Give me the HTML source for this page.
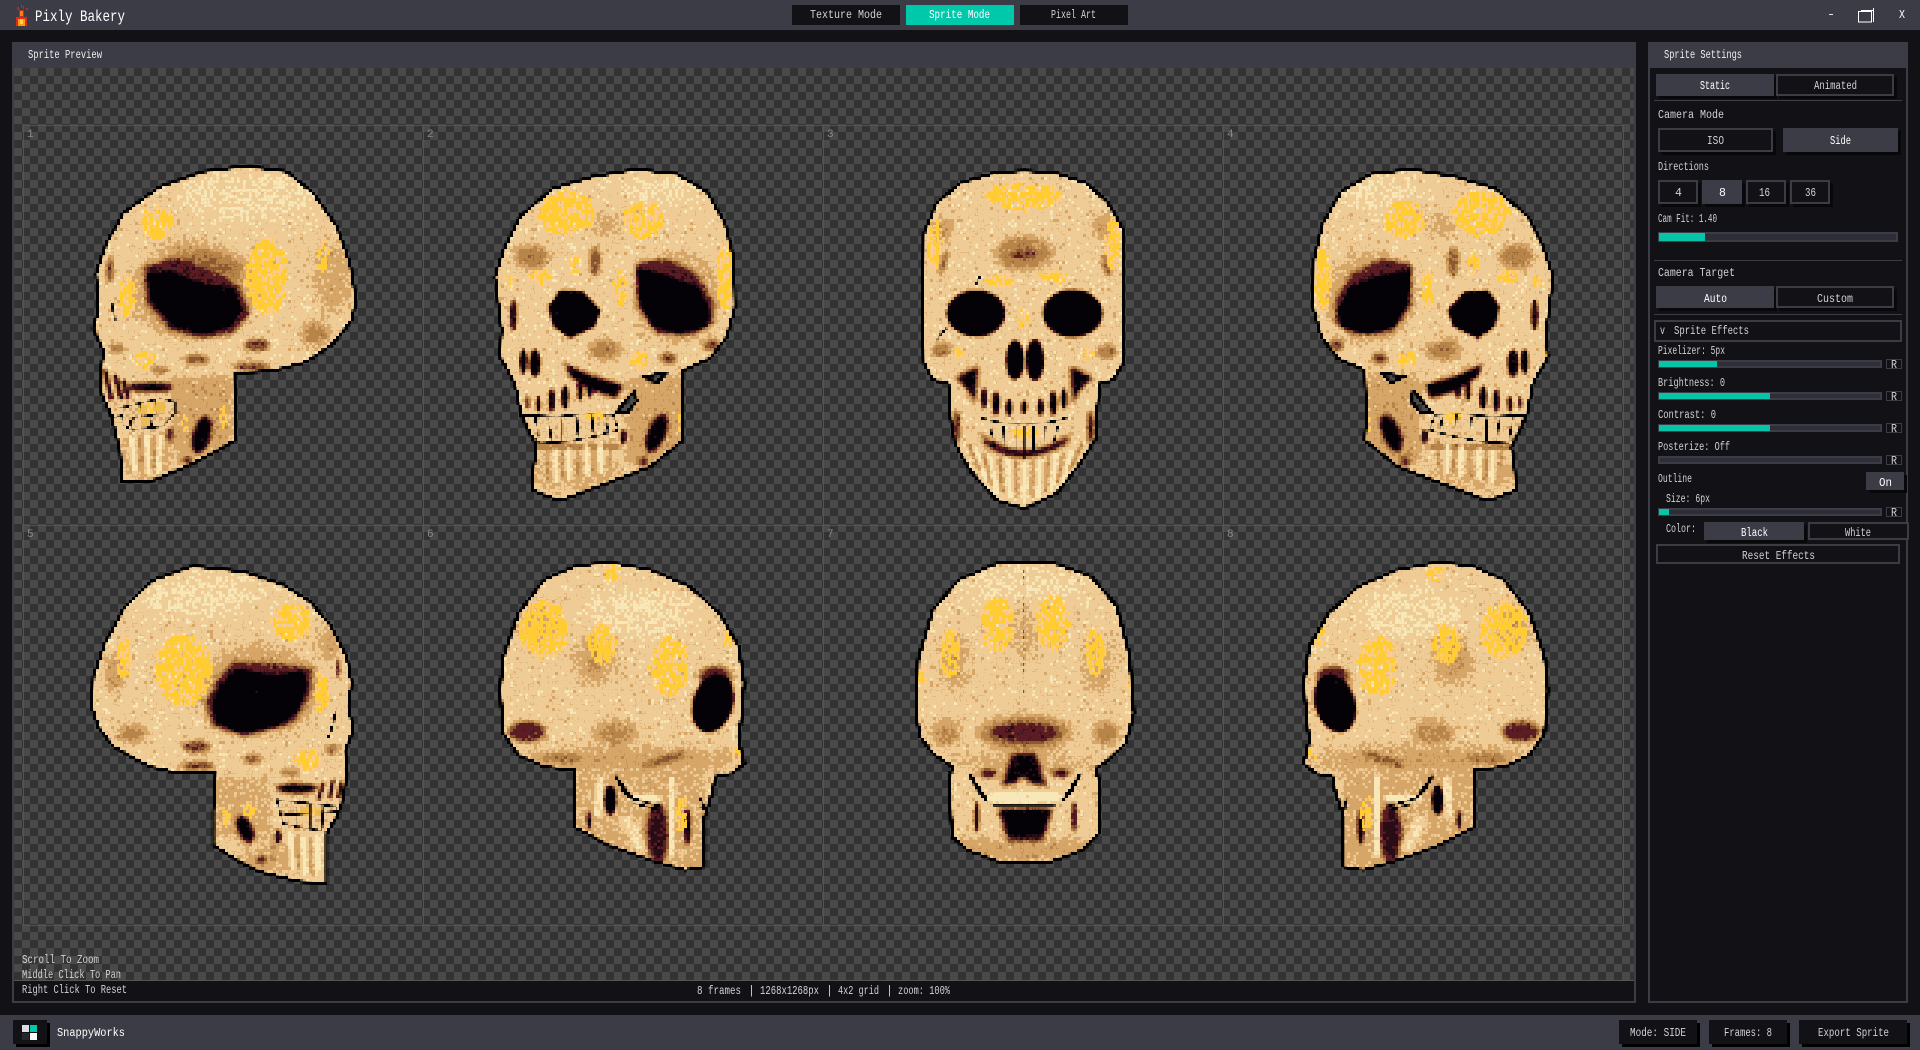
<!DOCTYPE html>
<html><head><meta charset="utf-8"><title>Pixly Bakery</title>
<style>
html,body{margin:0;padding:0;background:#111116;overflow:hidden}
svg{display:block}
text{font-family:"Liberation Mono","DejaVu Sans Mono",monospace;font-size:11.5px;fill:#d2d2d6}
.w{fill:#fff}.n{fill:#8a8a8e;font-size:11px}
.cr{shape-rendering:crispEdges}
.b3{filter:url(#b3)}.b6{filter:url(#b6)}.b12{filter:url(#b12)}.b20{filter:url(#b20)}
</style></head><body>
<svg xmlns="http://www.w3.org/2000/svg" width="1920" height="1050" viewBox="0 0 1920 1050">
<defs>
<pattern id="chk" x="14" y="68" width="16" height="16" patternUnits="userSpaceOnUse">
<rect width="16" height="16" fill="#333"/><rect width="8" height="8" fill="#4a4a4a"/><rect x="8" y="8" width="8" height="8" fill="#4a4a4a"/>
</pattern>
<filter id="b3" x="-50%" y="-50%" width="200%" height="200%"><feGaussianBlur stdDeviation="3"/></filter>
<filter id="b6" x="-50%" y="-50%" width="200%" height="200%"><feGaussianBlur stdDeviation="6"/></filter>
<filter id="b12" x="-60%" y="-60%" width="220%" height="220%"><feGaussianBlur stdDeviation="12"/></filter>
<filter id="b20" x="-60%" y="-60%" width="220%" height="220%"><feGaussianBlur stdDeviation="20"/></filter>
<filter id="pal" filterUnits="userSpaceOnUse" x="0" y="0" width="1920" height="1050" color-interpolation-filters="sRGB">
<feTurbulence type="fractalNoise" baseFrequency=".55" numOctaves="2" seed="3" result="t"/>
<feColorMatrix in="t" values="1 0 0 0 0 1 0 0 0 0 1 0 0 0 0 0 0 0 0 1" result="n"/>
<feComposite in="SourceGraphic" in2="n" operator="arithmetic" k1="0" k2="1" k3=".36" k4="-.18"/>
<feComponentTransfer>
<feFuncR type="discrete" tableValues=".02 .16 .36 .55 .72 .84 .94 .98"/>
<feFuncG type="discrete" tableValues=".01 .05 .11 .35 .52 .65 .80 .91"/>
<feFuncB type="discrete" tableValues=".03 .09 .14 .19 .29 .41 .59 .72"/>
</feComponentTransfer>
<feComposite in2="SourceAlpha" operator="in"/>
</filter>
<filter id="yel" filterUnits="userSpaceOnUse" x="0" y="0" width="1920" height="1050" color-interpolation-filters="sRGB">
<feTurbulence type="fractalNoise" baseFrequency=".5 .14" numOctaves="2" seed="11" result="t"/>
<feColorMatrix in="t" values="0 0 0 0 1 0 0 0 0 .8 0 0 0 0 .2 3 0 0 0 -.72" result="na"/>
<feComposite in="SourceGraphic" in2="na" operator="arithmetic" k1="1" k2="0" k3="0" k4="0"/>
<feComponentTransfer result="m"><feFuncA type="discrete" tableValues="0 1"/></feComponentTransfer>
<feFlood flood-color="#ffcc33"/>
<feComposite in2="m" operator="in"/>
</filter>
<filter id="mos" filterUnits="userSpaceOnUse" primitiveUnits="userSpaceOnUse" x="0" y="0" width="1920" height="1050" color-interpolation-filters="sRGB">
<feFlood x="1" y="1" width="1" height="1" flood-color="#000"/>
<feComposite x="0" y="0" width="3" height="3"/>
<feTile x="0" y="0" width="1920" height="1050" result="a"/>
<feComposite in="SourceGraphic" in2="a" operator="in"/>
<feMorphology operator="dilate" radius="1"/>
</filter>
<path id="p1" d="M560 108L680 125L760 190L830 290L870 400L888 510L875 570L820 640L740 695L640 722L522 730L528 930L400 1000L270 1055L185 1055L180 960L155 860L125 790L125 710L130 660L100 595L115 540L108 430L140 340L190 250L300 170L430 125Z"/>
<path id="p2" clip-rule="evenodd" fill-rule="evenodd" d="M470 58L590 72L680 125L735 220L762 330L765 470L740 560L690 625L610 660L605 800L610 870L510 950L380 1000L240 1052L155 1020L160 960L170 890L125 800L105 700L60 620L65 540L45 380L75 290L120 200L220 115L340 80ZM465 720L405 790L445 785L470 755ZM490 680L530 700L560 668Z"/>
<path id="p3" d="M372 62L470 70L560 100L625 160L670 240L672 500L668 640L640 690L600 700L590 790L590 860L540 940L470 1030L372 1075L290 1050L210 960L165 880L150 790L145 700L100 690L72 640L68 500L72 250L110 160L180 100L280 70Z"/>
<path id="p5" d="M370 48L520 65L640 105L720 155L780 225L830 320L845 400L835 470L850 540L825 600L830 680L815 760L800 800L770 850L770 1000L690 995L570 965L500 930L430 885L430 780L438 668L330 670L240 650L130 590L85 530L65 470L70 380L105 280L165 170L250 90Z"/>
<path id="p6" clip-rule="evenodd" fill-rule="evenodd" d="M300 36L400 60L490 110L560 190L605 290L618 400L612 500L605 570L618 640L590 670L550 680L545 720L525 800L525 950L480 960L410 935L300 885L220 830L220 660L150 650L90 615L55 550L47 420L55 320L90 190L150 90L220 50ZM318 680L355 745L335 720Z"/>
<path id="p7" clip-rule="evenodd" fill-rule="evenodd" d="M1272 36L1340 38L1430 80L1490 170L1520 320L1530 490L1510 580L1460 640L1440 655L1450 700L1448 850L1410 900L1335 935L1215 935L1140 900L1105 860L1097 700L1105 650L1060 610L1030 560L1020 490L1025 330L1060 180L1120 90L1210 40ZM1145 672L1185 750L1165 720ZM1405 672L1365 750L1385 720Z"/>
<clipPath id="c1"><use href="#p1"/></clipPath>
<clipPath id="c2"><use href="#p2" clip-rule="evenodd"/></clipPath>
<clipPath id="c3"><use href="#p3"/></clipPath>
<clipPath id="c5"><use href="#p5"/></clipPath>
<clipPath id="c6"><use href="#p6" clip-rule="evenodd"/></clipPath>
<clipPath id="c7"><use href="#p7" clip-rule="evenodd"/></clipPath>

<!-- paint layers -->
<g id="s1p" transform="translate(60 130) scale(.33333)"><g clip-path="url(#c1)">
<rect width="1000" height="1200" fill="#cbcbcb"/>
<ellipse class="b20" cx="560" cy="200" rx="210" ry="70" fill="#dadada"/>
<ellipse class="b20" cx="820" cy="440" rx="60" ry="110" fill="#adadad"/>
<ellipse class="b12" cx="770" cy="610" rx="42" ry="34" fill="#8c8c8c"/>
<ellipse class="b20" cx="400" cy="480" rx="190" ry="145" fill="#a8a8a8"/>
<ellipse class="b12" cx="425" cy="420" rx="120" ry="55" fill="#7a7a7a"/>
<path class="b6" d="M250 410L340 385L450 420L540 470L570 550L520 610L420 625L330 600L260 520Z" fill="#404040"/>
<path class="b3" d="M262 430L330 422L430 460L520 475L548 540L510 590L430 612L340 590L272 510Z" fill="#000"/>
<ellipse class="b6" cx="590" cy="645" rx="38" ry="18" fill="#555"/>
<ellipse class="b6" cx="575" cy="710" rx="55" ry="12" fill="#555"/>
<ellipse class="b6" cx="410" cy="688" rx="38" ry="14" fill="#666"/>
<ellipse class="b6" cx="170" cy="655" rx="22" ry="16" fill="#808080"/>
<ellipse class="b6" cx="300" cy="720" rx="26" ry="12" fill="#808080"/>
<ellipse class="b6" cx="150" cy="420" rx="10" ry="40" fill="#555"/>
<rect class="b12" x="330" y="740" width="190" height="230" fill="#a8a8a8"/>
<ellipse class="b20" cx="260" cy="980" rx="100" ry="70" fill="#b4b4b4"/>
<ellipse class="b6" cx="270" cy="772" rx="70" ry="15" fill="#111"/>
<path class="b3" d="M135 720L155 810M165 735L185 810M190 750L205 805" stroke="#222" stroke-width="14" fill="none"/>
<rect class="b3" x="150" y="810" width="190" height="70" fill="#c4c4c4"/>
<ellipse class="b6" cx="425" cy="915" rx="26" ry="58" transform="rotate(15 425 915)" fill="#000"/>
<ellipse class="b6" cx="382" cy="990" rx="18" ry="12" fill="#444"/>
<ellipse class="b6" cx="330" cy="915" rx="9" ry="22" fill="#222"/>
<path class="b3" d="M215 920L225 1030M260 910L265 1030M300 915L295 1030" stroke="#efefef" stroke-width="14" fill="none"/>
<path class="b3" d="M238 915L245 1030M282 915L280 1020" stroke="#909090" stroke-width="8" fill="none"/>
</g></g>
<g id="s2p" transform="translate(480 150) scale(.33333)"><g clip-path="url(#c2)">
<rect width="1000" height="1200" fill="#cbcbcb"/>
<ellipse class="b20" cx="570" cy="120" rx="130" ry="45" fill="#dadada"/>
<ellipse class="b12" cx="155" cy="320" rx="52" ry="36" fill="#868686"/>
<ellipse class="b12" cx="375" cy="600" rx="50" ry="30" fill="#868686"/>
<ellipse class="b6" cx="345" cy="335" rx="16" ry="45" fill="#666"/>
<ellipse class="b20" cx="380" cy="225" rx="40" ry="30" fill="#a8a8a8"/>
<ellipse class="b20" cx="590" cy="440" rx="130" ry="130" fill="#a8a8a8"/>
<path class="b6" d="M470 340L560 325L650 370L700 450L700 520L640 555L530 550L470 470Z" fill="#444"/>
<path class="b3" d="M470 355L560 375L655 410L690 480L680 530L600 553L520 530L480 460Z" fill="#000"/>
<path class="b3" d="M205 470L240 420L310 425L362 480L345 530L270 565L220 530Z" fill="#000"/>
<ellipse class="b6" cx="695" cy="585" rx="24" ry="18" fill="#5a5a5a"/>
<ellipse class="b6" cx="565" cy="625" rx="24" ry="16" fill="#555"/>
<ellipse class="b3" cx="130" cy="635" rx="11" ry="38" fill="#000"/>
<ellipse class="b3" cx="165" cy="640" rx="17" ry="42" fill="#111"/>
<ellipse class="b3" cx="100" cy="495" rx="11" ry="48" fill="#222"/>
<path class="b6" d="M255 640L330 675L430 705L410 745L330 720L270 680Z" fill="#000"/>
<rect class="b12" x="440" y="680" width="170" height="260" fill="#a8a8a8"/>
<ellipse class="b20" cx="280" cy="970" rx="150" ry="55" fill="#b4b4b4"/>
<g class="b3" fill="#111"><ellipse cx="215" cy="752" rx="10" ry="36"/><ellipse cx="255" cy="742" rx="11" ry="36"/><ellipse cx="175" cy="762" rx="7" ry="25"/><ellipse cx="143" cy="758" rx="5" ry="20"/><ellipse cx="300" cy="720" rx="9" ry="32"/><ellipse cx="330" cy="715" rx="9" ry="30"/></g>
<rect class="b3" x="130" y="795" width="280" height="80" fill="#c4c4c4"/>
<ellipse class="b6" cx="530" cy="850" rx="26" ry="60" transform="rotate(22 530 850)" fill="#000"/>
<ellipse class="b6" cx="490" cy="935" rx="18" ry="14" fill="#444"/>
<ellipse class="b3" cx="430" cy="860" rx="10" ry="22" fill="#222"/>
<rect class="b6" x="170" y="885" width="250" height="12" fill="#555"/>
<path class="b3" d="M225 900L230 1000M265 895L268 990M320 885L322 980M360 880L365 970" stroke="#efefef" stroke-width="14" fill="none"/>
<path class="b3" d="M200 900L205 985M245 900L248 990M295 890L295 985M340 880L342 970M390 870L390 950" stroke="#8e8e8e" stroke-width="8" fill="none"/>
</g></g>
<g id="s3p" transform="translate(900 150) scale(.33333)"><g clip-path="url(#c3)">
<rect width="1000" height="1200" fill="#cbcbcb"/>
<ellipse class="b12" cx="372" cy="310" rx="85" ry="50" fill="#8a8a8a"/>
<ellipse class="b6" cx="372" cy="312" rx="40" ry="16" fill="#606060"/>
<ellipse class="b12" cx="130" cy="240" rx="30" ry="40" fill="#a0a0a0"/>
<ellipse class="b12" cx="610" cy="230" rx="30" ry="40" fill="#a0a0a0"/>
<ellipse class="b6" cx="130" cy="340" rx="9" ry="38" transform="rotate(18 130 340)" fill="#666"/>
<ellipse class="b6" cx="618" cy="345" rx="9" ry="38" transform="rotate(-18 618 345)" fill="#666"/>
<ellipse class="b3" cx="228" cy="490" rx="88" ry="70" fill="#000"/>
<ellipse class="b3" cx="518" cy="490" rx="90" ry="72" fill="#000"/>
<ellipse class="b6" cx="125" cy="600" rx="30" ry="22" fill="#808080"/>
<ellipse class="b6" cx="620" cy="605" rx="30" ry="22" fill="#808080"/>
<ellipse class="b3" cx="345" cy="630" rx="27" ry="60" fill="#000"/>
<ellipse class="b3" cx="405" cy="630" rx="27" ry="62" fill="#000"/>
<path class="b6" d="M165 685Q205 660 235 650L225 760Q205 710 165 685Z" fill="#111"/>
<path class="b6" d="M580 685Q540 660 510 650L520 760Q540 710 580 685Z" fill="#111"/>
<g class="b3" fill="#111"><ellipse cx="252" cy="745" rx="9" ry="32"/><ellipse cx="288" cy="760" rx="11" ry="36"/><ellipse cx="327" cy="772" rx="10" ry="26"/><ellipse cx="372" cy="772" rx="9" ry="20"/><ellipse cx="422" cy="772" rx="10" ry="26"/><ellipse cx="460" cy="760" rx="11" ry="38"/><ellipse cx="492" cy="745" rx="9" ry="32"/></g>
<ellipse class="b6" cx="170" cy="830" rx="9" ry="50" fill="#222"/>
<ellipse class="b6" cx="572" cy="830" rx="9" ry="50" fill="#222"/>
<path class="b6" d="M240 850Q372 950 510 850L500 880Q372 960 260 890Z" fill="#222"/>
<path class="b3" d="M230 900L262 1000M270 910L290 1030M325 925L330 1050M372 935L372 1060M420 925L415 1050M470 910L455 1030M515 900L490 1000" stroke="#efefef" stroke-width="12" fill="none"/>
<path class="b3" d="M205 880L240 960M250 905L272 1000M298 920L308 1030M348 930L350 1040M398 930L396 1040M445 920L436 1030M492 905L472 1000M545 880L510 960" stroke="#8a8a8a" stroke-width="9" fill="none"/>
</g></g>
<g id="s5p" transform="translate(70 550) scale(.33333)"><g clip-path="url(#c5)">
<rect width="1000" height="1200" fill="#cbcbcb"/>
<ellipse class="b20" cx="390" cy="140" rx="180" ry="60" fill="#dadada"/>
<ellipse class="b12" cx="135" cy="370" rx="28" ry="60" fill="#a0a0a0"/>
<ellipse class="b20" cx="780" cy="280" rx="30" ry="50" fill="#9a9a9a"/>
<ellipse class="b12" cx="185" cy="550" rx="44" ry="28" fill="#8a8a8a"/>
<ellipse class="b20" cx="570" cy="420" rx="180" ry="135" fill="#a8a8a8"/>
<path class="b6" d="M490 335L620 340L730 355L720 440L670 520L520 560L430 530L405 460L440 390Z" fill="#444"/>
<path class="b3" d="M500 355L620 375L700 362L712 410L680 490L620 530L510 550L440 520L425 470L445 410Z" fill="#000"/>
<ellipse class="b6" cx="380" cy="590" rx="42" ry="18" fill="#5a5a5a"/>
<ellipse class="b6" cx="385" cy="648" rx="50" ry="13" fill="#555"/>
<ellipse class="b6" cx="545" cy="628" rx="28" ry="13" fill="#666"/>
<ellipse class="b6" cx="660" cy="668" rx="30" ry="12" fill="#808080"/>
<ellipse class="b6" cx="785" cy="598" rx="22" ry="16" fill="#808080"/>
<ellipse class="b3" cx="805" cy="355" rx="6" ry="30" fill="#444"/>
<rect class="b12" x="430" y="680" width="170" height="180" fill="#b0b0b0"/>
<ellipse class="b20" cx="600" cy="920" rx="110" ry="50" fill="#b0b0b0"/>
<ellipse class="b6" cx="680" cy="715" rx="62" ry="14" fill="#000"/>
<path class="b3" d="M760 700L745 750M790 690L778 745M815 695L805 745" stroke="#222" stroke-width="12" fill="none"/>
<rect class="b3" x="640" y="755" width="160" height="85" fill="#c4c4c4"/>
<ellipse class="b6" cx="525" cy="838" rx="22" ry="44" transform="rotate(-25 525 838)" fill="#000"/>
<ellipse class="b6" cx="572" cy="930" rx="18" ry="12" fill="#444"/>
<ellipse class="b3" cx="625" cy="860" rx="9" ry="22" fill="#222"/>
<path class="b3" d="M660 850L670 960M700 860L705 975M740 860L745 970" stroke="#efefef" stroke-width="15" fill="none"/>
<path class="b3" d="M680 860L688 965M722 860L725 975M610 860L610 940" stroke="#909090" stroke-width="8" fill="none"/>
</g></g>
<g id="s6p" transform="translate(480 550) scale(.42743 .33333)"><g clip-path="url(#c6)">
<rect width="1000" height="1200" fill="#cbcbcb"/>
<ellipse class="b20" cx="370" cy="190" rx="130" ry="70" fill="#dadada"/>
<ellipse class="b20" cx="130" cy="230" rx="40" ry="70" fill="#a8a8a8"/>
<ellipse class="b20" cx="270" cy="330" rx="40" ry="70" fill="#9a9a9a"/>
<ellipse class="b12" cx="315" cy="550" rx="50" ry="36" fill="#909090"/>
<ellipse class="b20" cx="340" cy="630" rx="270" ry="34" fill="#a0a0a0"/>
<ellipse class="b6" cx="110" cy="545" rx="44" ry="32" fill="#4a4a4a"/>
<ellipse class="b6" cx="190" cy="625" rx="50" ry="14" fill="#808080"/>
<ellipse class="b6" cx="430" cy="630" rx="60" ry="10" transform="rotate(-25 430 630)" fill="#666"/>
<ellipse class="b6" cx="550" cy="380" rx="38" ry="32" fill="#444"/>
<ellipse class="b3" cx="545" cy="460" rx="48" ry="88" transform="rotate(10 545 460)" fill="#000"/>
<rect class="b6" x="220" y="660" width="310" height="300" fill="#b4b4b4"/>
<ellipse class="b3" cx="305" cy="750" rx="14" ry="45" fill="#000"/>
<ellipse class="b3" cx="255" cy="810" rx="6" ry="28" fill="#222"/>
<ellipse class="b6" cx="415" cy="850" rx="26" ry="90" fill="#333"/>
<ellipse class="b3" cx="485" cy="830" rx="8" ry="55" fill="#111"/>
<ellipse class="b3" cx="385" cy="745" rx="42" ry="12" fill="#efefef"/>
<path class="b3" d="M450 680L445 920" stroke="#e6e6e6" stroke-width="30" fill="none"/>
<path class="b3" d="M285 680L275 800" stroke="#e0e0e0" stroke-width="22" fill="none"/>
<path class="b6" d="M340 800L380 900" stroke="#e0e0e0" stroke-width="26" fill="none"/>
</g></g>
<g id="s7p" transform="translate(480 550) scale(.42743 .33333)"><g clip-path="url(#c7)">
<rect x="900" width="800" height="1200" fill="#cbcbcb"/>
<ellipse class="b20" cx="1270" cy="110" rx="140" ry="50" fill="#dadada"/>
<ellipse class="b20" cx="1272" cy="250" rx="30" ry="90" fill="#b0b0b0"/>
<ellipse class="b20" cx="1110" cy="340" rx="30" ry="90" fill="#a4a4a4"/>
<ellipse class="b20" cx="1445" cy="340" rx="30" ry="90" fill="#a4a4a4"/>
<ellipse class="b12" cx="1090" cy="550" rx="30" ry="40" fill="#909090"/>
<ellipse class="b12" cx="1465" cy="550" rx="30" ry="40" fill="#909090"/>
<ellipse class="b12" cx="1275" cy="550" rx="110" ry="55" fill="#8a8a8a"/>
<ellipse class="b6" cx="1275" cy="548" rx="80" ry="30" fill="#444"/>
<ellipse class="b20" cx="1272" cy="640" rx="200" ry="18" fill="#a4a4a4"/>
<path class="b6" d="M1245 610L1300 610L1325 710L1290 700L1270 680L1250 700L1220 710Z" fill="#0a0a0a"/>
<ellipse class="b6" cx="1190" cy="670" rx="20" ry="12" fill="#222"/>
<ellipse class="b6" cx="1360" cy="670" rx="20" ry="12" fill="#222"/>
<ellipse class="b3" cx="1270" cy="742" rx="90" ry="18" fill="#efefef"/>
<path class="b6" d="M1212 775L1340 775L1312 890L1240 890Z" fill="#000"/>
<ellipse class="b6" cx="1272" cy="900" rx="50" ry="22" fill="#555"/>
<rect class="b12" x="1110" y="870" width="330" height="60" fill="#a8a8a8"/>
<ellipse class="b3" cx="1162" cy="800" rx="6" ry="48" fill="#222"/>
<ellipse class="b3" cx="1390" cy="800" rx="6" ry="48" fill="#222"/>
<ellipse class="b6" cx="1100" cy="750" rx="5" ry="50" fill="#a0a0a0"/>
<ellipse class="b6" cx="1445" cy="750" rx="5" ry="50" fill="#a0a0a0"/>
</g></g>

<!-- yellow -->
<g id="s1y" transform="translate(60 130) scale(.33333)"><g clip-path="url(#c1)"><g class="b12" fill="#fc3">
<ellipse cx="290" cy="280" rx="55" ry="55"/><ellipse cx="620" cy="440" rx="68" ry="120"/><ellipse cx="790" cy="380" rx="18" ry="60"/><ellipse cx="200" cy="500" rx="28" ry="70"/><ellipse cx="255" cy="690" rx="42" ry="25"/><ellipse cx="490" cy="860" rx="14" ry="50"/><ellipse cx="375" cy="880" rx="12" ry="40"/><ellipse cx="260" cy="840" rx="40" ry="22"/></g></g></g>
<g id="s2y" transform="translate(480 150) scale(.33333)"><g clip-path="url(#c2)"><g class="b12" fill="#fc3">
<ellipse cx="260" cy="190" rx="90" ry="70"/><ellipse cx="490" cy="210" rx="65" ry="60"/><ellipse cx="735" cy="380" rx="28" ry="110"/><ellipse cx="420" cy="420" rx="22" ry="70"/><ellipse cx="180" cy="380" rx="40" ry="24"/><ellipse cx="90" cy="395" rx="22" ry="24"/><ellipse cx="480" cy="630" rx="32" ry="34"/><ellipse cx="600" cy="820" rx="14" ry="40"/><ellipse cx="350" cy="800" rx="40" ry="20"/><ellipse cx="285" cy="340" rx="20" ry="40"/><ellipse cx="70" cy="610" rx="12" ry="24"/></g></g></g>
<g id="s3y" transform="translate(900 150) scale(.33333)"><g clip-path="url(#c3)"><g class="b12" fill="#fc3">
<ellipse cx="370" cy="140" rx="120" ry="46"/><ellipse cx="105" cy="280" rx="26" ry="85"/><ellipse cx="640" cy="280" rx="26" ry="85"/><ellipse cx="300" cy="390" rx="52" ry="25"/><ellipse cx="460" cy="380" rx="52" ry="25"/><ellipse cx="370" cy="510" rx="20" ry="42"/><ellipse cx="180" cy="610" rx="30" ry="18"/><ellipse cx="565" cy="610" rx="34" ry="18"/><ellipse cx="372" cy="850" rx="60" ry="20"/></g></g></g>
<g id="s5y" transform="translate(70 550) scale(.33333)"><g clip-path="url(#c5)"><g class="b12" fill="#fc3">
<ellipse cx="665" cy="215" rx="65" ry="60"/><ellipse cx="340" cy="360" rx="90" ry="110"/><ellipse cx="160" cy="320" rx="24" ry="72"/><ellipse cx="755" cy="430" rx="26" ry="70"/><ellipse cx="715" cy="630" rx="42" ry="34"/><ellipse cx="470" cy="800" rx="14" ry="50"/><ellipse cx="710" cy="785" rx="35" ry="18"/><ellipse cx="540" cy="785" rx="24" ry="24"/></g></g></g>
<g id="s6y" transform="translate(480 550) scale(.42743 .33333)"><g clip-path="url(#c6)"><g class="b12" fill="#fc3">
<ellipse cx="150" cy="240" rx="60" ry="90"/><ellipse cx="285" cy="280" rx="36" ry="70"/><ellipse cx="445" cy="350" rx="50" ry="95"/><ellipse cx="600" cy="610" rx="14" ry="32"/><ellipse cx="582" cy="260" rx="15" ry="50"/><ellipse cx="470" cy="790" rx="16" ry="70"/><ellipse cx="310" cy="70" rx="24" ry="30"/></g></g></g>
<g id="s7y" transform="translate(480 550) scale(.42743 .33333)"><g clip-path="url(#c7)"><g class="b12" fill="#fc3">
<ellipse cx="1210" cy="220" rx="42" ry="90"/><ellipse cx="1340" cy="220" rx="42" ry="90"/><ellipse cx="1100" cy="310" rx="24" ry="82"/><ellipse cx="1440" cy="300" rx="24" ry="82"/><ellipse cx="1035" cy="375" rx="11" ry="50"/><ellipse cx="1515" cy="400" rx="11" ry="52"/></g></g></g>

<!-- lines -->
<g id="s1l" transform="translate(60 130) scale(.33333)" fill="none" stroke="#000" stroke-linejoin="round">
<use href="#p1" stroke-width="9"/>
<g fill="#ecbc50" stroke="none"><rect x="232" y="825" width="32" height="30"/><rect x="278" y="815" width="34" height="32"/><rect x="245" y="862" width="28" height="26"/></g>
<path stroke-width="5" d="M150 835L160 865L185 855L190 885L215 900L310 888L345 850L345 815L300 805L240 820L190 832ZM215 865L310 850M240 825L245 860M285 810L290 855M210 870L215 895M270 860L275 890"/>
<path stroke-width="6" d="M155 520L165 570"/>
</g>
<g id="s2l" transform="translate(480 150) scale(.33333)" fill="none" stroke="#000" stroke-linejoin="round">
<use href="#p2" stroke-width="9"/>
<path stroke-width="5" d="M130 795L230 800L330 790L400 795L415 840L340 860L260 875L180 880L150 850ZM165 800L175 860M205 805L215 875M245 805L245 870M290 800L295 860M335 795L340 850M375 795L385 845"/>
</g>
<g id="s3l" transform="translate(900 150) scale(.33333)" fill="none" stroke="#000" stroke-linejoin="round">
<use href="#p3" stroke-width="9"/>
<path stroke-width="5" d="M235 800Q300 825 372 820Q440 825 510 800M270 830L285 890M310 825L315 900M350 825L350 905M372 825L372 930M400 825L400 905M435 825L432 895M475 825L460 880"/>
<path stroke-width="6" d="M225 405L240 380M110 570L140 535"/>
</g>
<g id="s5l" transform="translate(70 550) scale(.33333)" fill="none" stroke="#000" stroke-linejoin="round">
<use href="#p5" stroke-width="9"/>
<g fill="#ecbc50" stroke="none"><rect x="690" y="770" width="34" height="28"/><rect x="735" y="775" width="30" height="24"/></g>
<path stroke-width="5" d="M620 750L640 820L680 830L770 845L800 800L800 770L720 760ZM640 795L800 785M680 770L680 830M720 765L720 835M760 770L755 840"/>
<path stroke-width="6" d="M800 470L790 520L775 565M500 672L550 672"/>
</g>
<g id="s6l" transform="translate(480 550) scale(.42743 .33333)" fill="none" stroke="#000" stroke-linejoin="round">
<use href="#p6" stroke-width="8"/>
<path stroke-width="6" d="M355 745L425 770M360 760L420 780M515 740L525 775L510 770"/>
</g>
<g id="s7l" transform="translate(480 550) scale(.42743 .33333)" fill="none" stroke="#000" stroke-linejoin="round">
<use href="#p7" stroke-width="8"/>
<path stroke-width="4" stroke-dasharray="6 14" d="M1272 60V440"/>
<path stroke-width="5" d="M1200 765L1345 765"/>
</g>
</defs>

<rect class="cr" width="1920" height="1050" fill="#111116"/>
<!-- top bar -->
<rect class="cr" width="1920" height="30" fill="#3c3c46"/>
<g class="cr">
<rect x="16" y="17" width="11" height="9" fill="#e02a18"/><rect x="18" y="19" width="7" height="7" fill="#ff9a10"/><rect x="20" y="19" width="3" height="5" fill="#ffd640"/>
<rect x="19" y="10" width="5" height="7" fill="#c42a1e"/><rect x="20" y="11" width="3" height="5" fill="#ff7a10"/>
<rect x="17" y="7" width="2" height="3" fill="#a83232"/><rect x="21" y="5" width="1" height="3" fill="#a83232"/><rect x="23" y="6" width="1" height="3" fill="#a83232"/><rect x="26" y="8" width="2" height="2" fill="#a83232"/>
</g>
<text x="35" y="21" class="w" style="font-size:16px" textLength="90" lengthAdjust="spacingAndGlyphs">Pixly Bakery</text>
<g class="cr">
<rect x="792" y="5" width="108" height="20" fill="#111116"/>
<rect x="906" y="5" width="108" height="20" fill="#00c8aa"/>
<rect x="1020" y="5" width="108" height="20" fill="#111116"/>
</g>
<text x="810" y="18" textLength="72" lengthAdjust="spacingAndGlyphs">Texture Mode</text>
<text x="929" y="18" class="w" textLength="61" lengthAdjust="spacingAndGlyphs">Sprite Mode</text>
<text x="1051" y="18" textLength="45" lengthAdjust="spacingAndGlyphs">Pixel Art</text>
<rect class="cr" x="1829" y="14" width="4" height="1" fill="#e8e8e8"/>
<g fill="none" stroke="#fff" class="cr"><rect x="1858.5" y="11.5" width="13" height="10.5"/><path d="M1861 10.5H1873.5V21.5M1873.5 8V22"/></g>
<text x="1899" y="18" class="w" textLength="6" lengthAdjust="spacingAndGlyphs">X</text>

<!-- preview panel -->
<rect class="cr" x="12" y="42" width="1624" height="961" fill="#3c3c46"/>
<rect class="cr" x="14" y="68" width="1620" height="933" fill="url(#chk)"/>
<rect class="cr" x="14" y="980" width="1620" height="1" fill="#555"/>
<rect class="cr" x="14" y="981" width="1620" height="20" fill="#111116"/>
<text x="28" y="58" fill="#eee" style="fill:#eee" textLength="74" lengthAdjust="spacingAndGlyphs">Sprite Preview</text>

<!-- skulls -->
<g filter="url(#mos)">
<g filter="url(#pal)">
<use href="#s1p"/><use href="#s2p"/><use href="#s3p"/><use href="#s2p" transform="translate(2048 0) scale(-1 1)"/>
<use href="#s5p"/><use href="#s6p"/><use href="#s7p"/><use href="#s6p" transform="translate(2048 0) scale(-1 1)"/>
</g>
<g filter="url(#yel)">
<use href="#s1y"/><use href="#s2y"/><use href="#s3y"/><use href="#s2y" transform="translate(2048 0) scale(-1 1)"/>
<use href="#s5y"/><use href="#s6y"/><use href="#s7y"/><use href="#s6y" transform="translate(2048 0) scale(-1 1)"/>
</g>
<use href="#s1l"/><use href="#s2l"/><use href="#s3l"/><use href="#s2l" transform="translate(2048 0) scale(-1 1)"/>
<use href="#s5l"/><use href="#s6l"/><use href="#s7l"/><use href="#s6l" transform="translate(2048 0) scale(-1 1)"/>
</g>

<!-- frame grid -->
<g class="cr" fill="#8a3c40">
<rect x="23" y="125" width="1600" height="1"/><rect x="23" y="525" width="1600" height="1"/><rect x="23" y="925" width="1600" height="1"/>
<rect x="23" y="125" width="1" height="800"/><rect x="423" y="125" width="1" height="800"/><rect x="823" y="125" width="1" height="800"/><rect x="1223" y="125" width="1" height="800"/><rect x="1623" y="125" width="1" height="800"/>
</g>
<text x="27" y="137" class="n">1</text><text x="427" y="137" class="n">2</text><text x="827" y="137" class="n">3</text><text x="1227" y="137" class="n">4</text>
<text x="27" y="537" class="n">5</text><text x="427" y="537" class="n">6</text><text x="827" y="537" class="n">7</text><text x="1227" y="537" class="n">8</text>

<text x="22" y="963" textLength="77" lengthAdjust="spacingAndGlyphs">Scroll To Zoom</text>
<text x="22" y="978" textLength="99" lengthAdjust="spacingAndGlyphs">Middle Click To Pan</text>
<text x="22" y="993" textLength="105" lengthAdjust="spacingAndGlyphs">Right Click To Reset</text>
<text x="697" y="994" textLength="44" lengthAdjust="spacingAndGlyphs">8 frames</text>
<text x="748" y="994">|</text>
<text x="760" y="994" textLength="59" lengthAdjust="spacingAndGlyphs">1268x1268px</text>
<text x="826" y="994">|</text>
<text x="838" y="994" textLength="41" lengthAdjust="spacingAndGlyphs">4x2 grid</text>
<text x="886" y="994">|</text>
<text x="898" y="994" textLength="52" lengthAdjust="spacingAndGlyphs">zoom: 100%</text>

<!-- settings panel -->
<rect class="cr" x="1648" y="42" width="260" height="961" fill="#3c3c46"/>
<rect class="cr" x="1650" y="68" width="256" height="933" fill="#111116"/>
<text x="1664" y="58" style="fill:#eee" textLength="78" lengthAdjust="spacingAndGlyphs">Sprite Settings</text>

<g class="cr">
<!-- shadows -->
<g fill="#08080a">
<rect x="1659" y="77" width="118" height="22"/><rect x="1779" y="77" width="118" height="22"/>
<rect x="1661" y="131" width="115" height="24"/><rect x="1786" y="131" width="115" height="24"/>
<rect x="1661" y="183" width="40" height="24"/><rect x="1705" y="183" width="40" height="24"/><rect x="1749" y="183" width="40" height="24"/><rect x="1793" y="183" width="40" height="24"/>
<rect x="1659" y="289" width="118" height="22"/><rect x="1779" y="289" width="118" height="22"/>
<rect x="1869" y="475" width="38" height="18"/><rect x="1707" y="525" width="100" height="18"/>
</g>
<rect x="1656" y="74" width="118" height="22" fill="#3c3c46"/>
<rect x="1777" y="75" width="116" height="20" fill="#111116" stroke="#3c3c46" stroke-width="2"/>
<rect x="1654" y="100" width="248" height="1" fill="#3c3c46"/>
<rect x="1659" y="129" width="113" height="22" fill="#111116" stroke="#3c3c46" stroke-width="2"/>
<rect x="1783" y="128" width="115" height="24" fill="#3c3c46"/>
<rect x="1659" y="181" width="38" height="22" fill="#111116" stroke="#3c3c46" stroke-width="2"/>
<rect x="1702" y="180" width="40" height="24" fill="#3c3c46"/>
<rect x="1747" y="181" width="38" height="22" fill="#111116" stroke="#3c3c46" stroke-width="2"/>
<rect x="1791" y="181" width="38" height="22" fill="#111116" stroke="#3c3c46" stroke-width="2"/>
<rect x="1659" y="233" width="238" height="8" fill="#2e2e38" stroke="#3c3c46" stroke-width="2"/>
<rect x="1659" y="233" width="46" height="8" fill="#07c4a8"/>
<rect x="1654" y="260" width="248" height="1" fill="#3c3c46"/>
<rect x="1656" y="286" width="118" height="22" fill="#3c3c46"/>
<rect x="1777" y="287" width="116" height="20" fill="#111116" stroke="#3c3c46" stroke-width="2"/>
<rect x="1654" y="314" width="248" height="1" fill="#3c3c46"/>
<rect x="1655" y="321" width="246" height="20" fill="#111116" stroke="#3c3c46" stroke-width="2"/>
<!-- sliders -->
<g fill="#2e2e38" stroke="#3c3c46" stroke-width="2">
<rect x="1659" y="361" width="222" height="6"/><rect x="1659" y="393" width="222" height="6"/><rect x="1659" y="425" width="222" height="6"/><rect x="1659" y="457" width="222" height="6"/><rect x="1659" y="509" width="222" height="6"/>
</g>
<g fill="#07c4a8">
<rect x="1659" y="361" width="58" height="6"/><rect x="1659" y="393" width="111" height="6"/><rect x="1659" y="425" width="111" height="6"/><rect x="1659" y="509" width="10" height="6"/>
</g>
<g fill="#111116" stroke="#3c3c46" stroke-width="1">
<rect x="1886.5" y="359.5" width="15" height="9"/><rect x="1886.5" y="391.5" width="15" height="9"/><rect x="1886.5" y="423.5" width="15" height="9"/><rect x="1886.5" y="455.5" width="15" height="9"/><rect x="1886.5" y="507.5" width="15" height="9"/>
</g>
<rect x="1866" y="472" width="38" height="18" fill="#3c3c46"/>
<rect x="1704" y="522" width="100" height="18" fill="#3c3c46"/>
<rect x="1809" y="523" width="99" height="16" fill="#111116" stroke="#3c3c46" stroke-width="2"/>
<rect x="1657" y="545" width="242" height="18" fill="#111116" stroke="#3c3c46" stroke-width="2"/>
</g>
<g>
<text x="1700" y="89" class="w" textLength="30" lengthAdjust="spacingAndGlyphs">Static</text>
<text x="1814" y="89" textLength="43" lengthAdjust="spacingAndGlyphs">Animated</text>
<text x="1658" y="118" textLength="66" lengthAdjust="spacingAndGlyphs">Camera Mode</text>
<text x="1707" y="144" textLength="17" lengthAdjust="spacingAndGlyphs">ISO</text>
<text x="1830" y="144" class="w" textLength="21" lengthAdjust="spacingAndGlyphs">Side</text>
<text x="1658" y="170" textLength="51" lengthAdjust="spacingAndGlyphs">Directions</text>
<text x="1675" y="196">4</text><text x="1719" y="196" class="w">8</text><text x="1759" y="196" textLength="11" lengthAdjust="spacingAndGlyphs">16</text><text x="1805" y="196" textLength="11" lengthAdjust="spacingAndGlyphs">36</text>
<text x="1658" y="222" textLength="59" lengthAdjust="spacingAndGlyphs">Cam Fit: 1.40</text>
<text x="1658" y="276" textLength="77" lengthAdjust="spacingAndGlyphs">Camera Target</text>
<text x="1704" y="302" class="w" textLength="23" lengthAdjust="spacingAndGlyphs">Auto</text>
<text x="1817" y="302" textLength="36" lengthAdjust="spacingAndGlyphs">Custom</text>
<text x="1660" y="334" textLength="5" lengthAdjust="spacingAndGlyphs">v</text>
<text x="1674" y="334" textLength="75" lengthAdjust="spacingAndGlyphs">Sprite Effects</text>
<text x="1658" y="354" textLength="67" lengthAdjust="spacingAndGlyphs">Pixelizer: 5px</text>
<text x="1658" y="386" textLength="67" lengthAdjust="spacingAndGlyphs">Brightness: 0</text>
<text x="1658" y="418" textLength="58" lengthAdjust="spacingAndGlyphs">Contrast: 0</text>
<text x="1658" y="450" textLength="72" lengthAdjust="spacingAndGlyphs">Posterize: Off</text>
<text x="1658" y="482" textLength="34" lengthAdjust="spacingAndGlyphs">Outline</text>
<text x="1879" y="486" class="w" textLength="13" lengthAdjust="spacingAndGlyphs">On</text>
<text x="1666" y="502" textLength="44" lengthAdjust="spacingAndGlyphs">Size: 6px</text>
<text x="1666" y="532" textLength="30" lengthAdjust="spacingAndGlyphs">Color:</text>
<text x="1741" y="536" class="w" textLength="27" lengthAdjust="spacingAndGlyphs">Black</text>
<text x="1845" y="536" textLength="26" lengthAdjust="spacingAndGlyphs">White</text>
<text x="1742" y="559" textLength="73" lengthAdjust="spacingAndGlyphs">Reset Effects</text>
<g><text x="1891" y="368" textLength="6" lengthAdjust="spacingAndGlyphs">R</text><text x="1891" y="400" textLength="6" lengthAdjust="spacingAndGlyphs">R</text><text x="1891" y="432" textLength="6" lengthAdjust="spacingAndGlyphs">R</text><text x="1891" y="464" textLength="6" lengthAdjust="spacingAndGlyphs">R</text><text x="1891" y="516" textLength="6" lengthAdjust="spacingAndGlyphs">R</text></g>
</g>

<!-- footer -->
<rect class="cr" x="0" y="1015" width="1920" height="35" fill="#3c3c46"/>
<g class="cr">
<rect x="16" y="1023" width="34" height="24" fill="#000"/>
<rect x="13" y="1020" width="34" height="24" fill="#111116"/>
<rect x="22" y="1025" width="7" height="7" fill="#dcdce4"/>
<rect x="30" y="1025" width="7" height="7" fill="#00c8aa"/>
<rect x="22" y="1033" width="7" height="7" fill="#26262c"/>
<rect x="30" y="1033" width="7" height="7" fill="#fff"/>
<rect x="1622" y="1023" width="78" height="24" fill="#000"/><rect x="1619" y="1020" width="78" height="24" fill="#111116"/>
<rect x="1712" y="1023" width="78" height="24" fill="#000"/><rect x="1709" y="1020" width="78" height="24" fill="#111116"/>
<rect x="1802" y="1023" width="108" height="24" fill="#000"/><rect x="1799" y="1020" width="108" height="24" fill="#111116"/>
</g>
<text x="57" y="1036" class="w" textLength="68" lengthAdjust="spacingAndGlyphs">SnappyWorks</text>
<text x="1630" y="1036" textLength="56" lengthAdjust="spacingAndGlyphs">Mode: SIDE</text>
<text x="1724" y="1036" textLength="48" lengthAdjust="spacingAndGlyphs">Frames: 8</text>
<text x="1818" y="1036" textLength="71" lengthAdjust="spacingAndGlyphs">Export Sprite</text>
</svg>
</body></html>
